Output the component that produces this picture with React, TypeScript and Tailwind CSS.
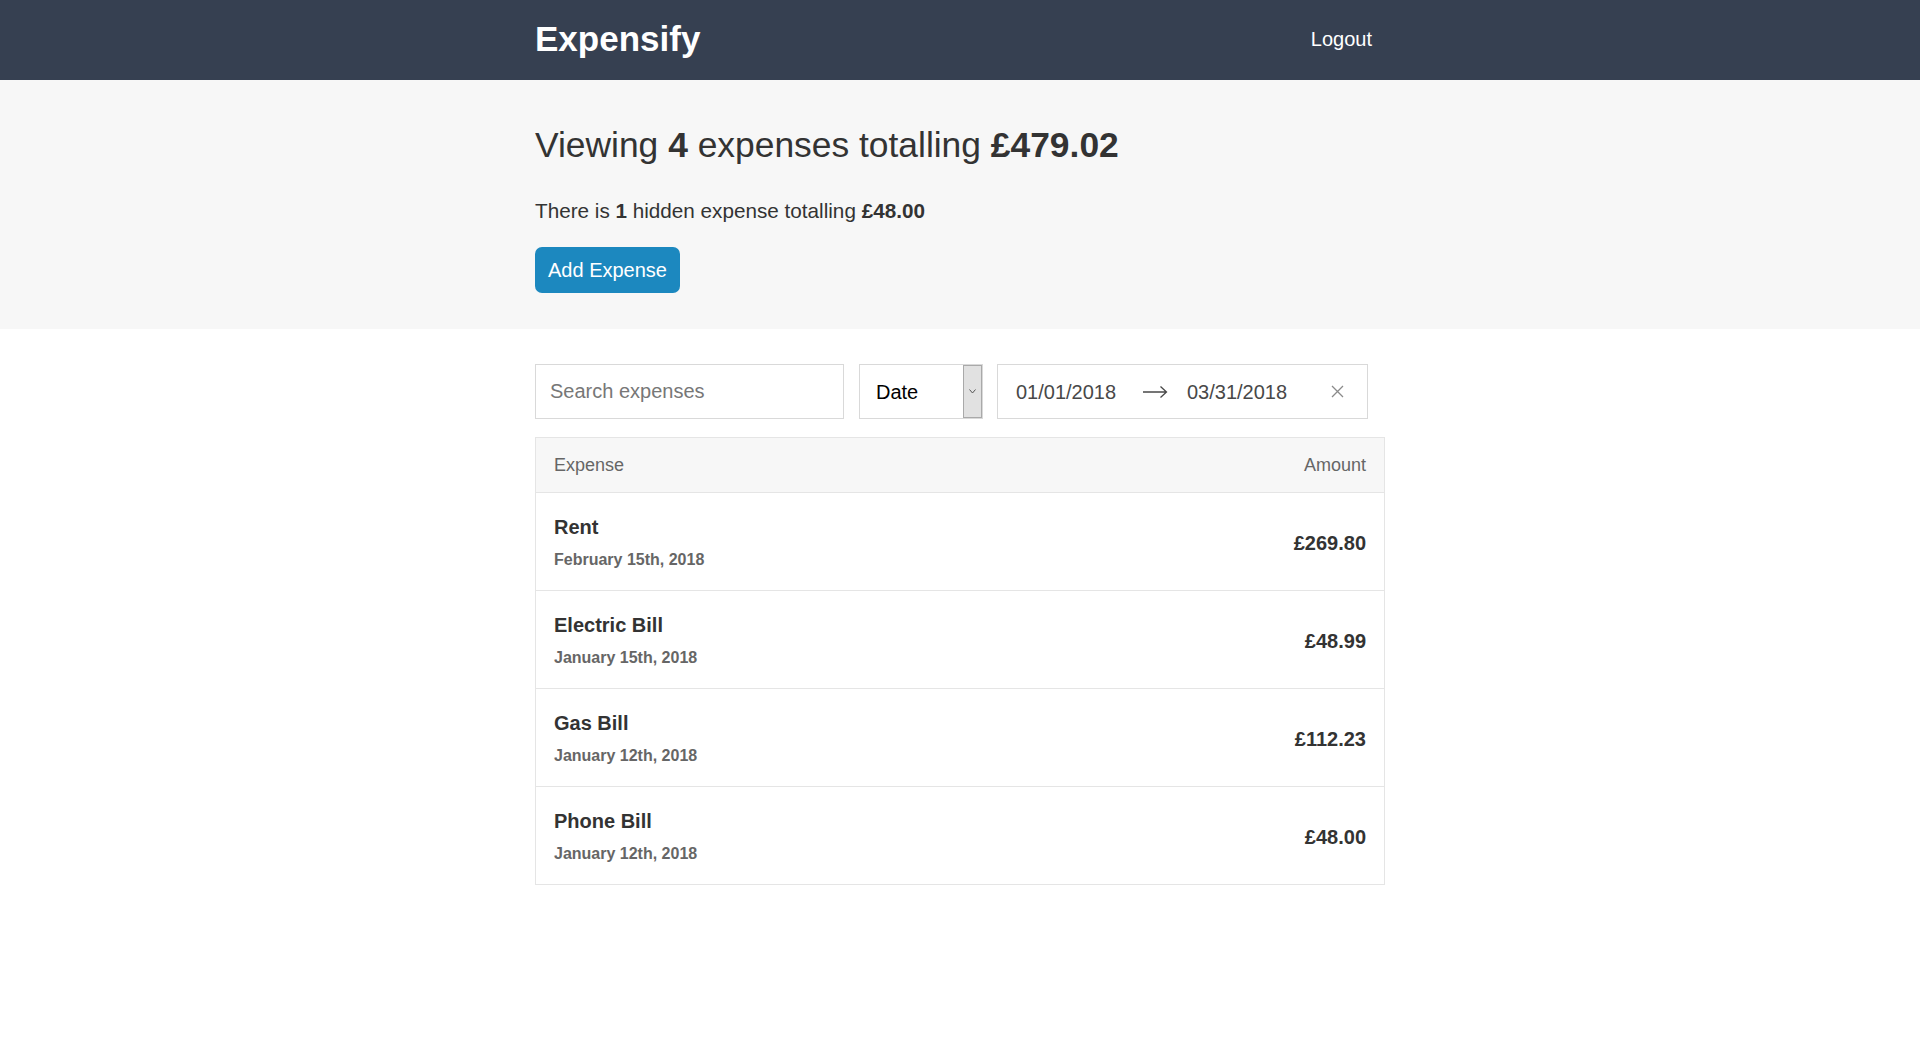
import { useState } from 'react';

type Expense = {
    id: number;
    description: string;
    date: string;
    amount: string;
};

const expenses: Expense[] = [
    { id: 1, description: 'Rent', date: 'February 15th, 2018', amount: '£269.80' },
    { id: 2, description: 'Electric Bill', date: 'January 15th, 2018', amount: '£48.99' },
    { id: 3, description: 'Gas Bill', date: 'January 12th, 2018', amount: '£112.23' },
    { id: 4, description: 'Phone Bill', date: 'January 12th, 2018', amount: '£48.00' },
];

export default function App() {
    const [text, setText] = useState('');

    return (
        <div className="min-h-screen bg-white font-['Liberation_Sans',Arial,sans-serif] text-[#333]">
            {/* header */}
            <header className="bg-[#364051]">
                <div className="mx-auto flex h-20 max-w-[850px] items-center justify-between pb-[3px]">
                    <h1 className="text-[35px] leading-[40px] font-bold text-white">Expensify</h1>
                    <button className="px-[13px] text-[20px] text-white">Logout</button>
                </div>
            </header>

            {/* page header / summary */}
            <div className="bg-[#f7f7f7] pt-[45px] pb-[36px]">
                <div className="mx-auto max-w-[850px]">
                    <h1 className="text-[35.4px] leading-[40px]">
                        Viewing <span className="font-bold">4</span> expenses totalling <span className="font-bold">£479.02</span>
                    </h1>
                    <p className="mt-[34px] text-[20.7px] leading-[24px]">
                        There is <span className="font-bold">1</span> hidden expense totalling <span className="font-bold">£48.00</span>
                    </p>
                    <button className="mt-[24px] h-[46px] rounded-[7px] bg-[#1c88bf] px-[13px] text-[20px] text-white">Add Expense</button>
                </div>
            </div>

            <div className="mx-auto max-w-[850px] pt-[35px]">
                {/* filters */}
                <div className="flex h-[55px]">
                    <input
                        value={text}
                        onChange={(e) => setText(e.target.value)}
                        placeholder="Search expenses"
                        className="h-full w-[309px] border border-[#d9d9d9] bg-white px-[14px] text-[20px] text-[#333] outline-none placeholder:text-[#777]"
                    />
                    <div className="ml-[15px] flex h-full w-[124px] items-stretch border border-[#d9d9d9] bg-white">
                        <span className="flex flex-1 items-center pl-[16px] text-[20px] text-black">Date</span>
                        <span className="flex w-[19px] items-center justify-center border border-[#a9a9a9] bg-[#e1e1e1]">
                            <svg width="7" height="5" viewBox="0 0 7 5" fill="none">
                                <path d="M0.5 0.5 L3.5 4 L6.5 0.5" stroke="#555" strokeWidth="1" />
                            </svg>
                        </span>
                    </div>
                    <div className="ml-[14px] flex h-full w-[371px] items-center border border-[#d9d9d9] bg-white pl-[18px] text-[20px] text-[#484848]">
                        <span className="w-[98px]">01/01/2018</span>
                        <svg className="ml-[29px]" width="25" height="14" viewBox="0 0 25 14" fill="none">
                            <path d="M0 7 H23.5 M17.5 1.5 L23.5 7 L17.5 12.5" stroke="#484848" strokeWidth="1.3" />
                        </svg>
                        <span className="ml-[19px] w-[98px]">03/31/2018</span>
                        <svg className="ml-[46px]" width="13" height="13" viewBox="0 0 13 13" fill="none">
                            <path d="M1 1 L12 12 M12 1 L1 12" stroke="#8a8a8a" strokeWidth="1.3" />
                        </svg>
                    </div>
                </div>

                {/* list */}
                <div className="mt-[18px] border border-[#e5e5e5]">
                    <div className="flex h-[55px] items-center justify-between border-b border-[#e5e5e5] bg-[#f7f7f7] px-[18px] text-[18px] text-[#666]">
                        <span>Expense</span>
                        <span>Amount</span>
                    </div>
                    {expenses.map((expense) => (
                        <div
                            key={expense.id}
                            className="flex items-center justify-between border-b border-[#e5e5e5] px-[18px] pt-[23px] pb-[21px] last:border-b-0"
                        >
                            <div>
                                <h3 className="mb-[12px] text-[20px] leading-[23px] font-bold text-[#333]">{expense.description}</h3>
                                <span className="block text-[16px] leading-[18px] font-bold text-[#666]">{expense.date}</span>
                            </div>
                            <h3 className="text-[20px] font-bold text-[#333]">{expense.amount}</h3>
                        </div>
                    ))}
                </div>
            </div>
        </div>
    );
}
